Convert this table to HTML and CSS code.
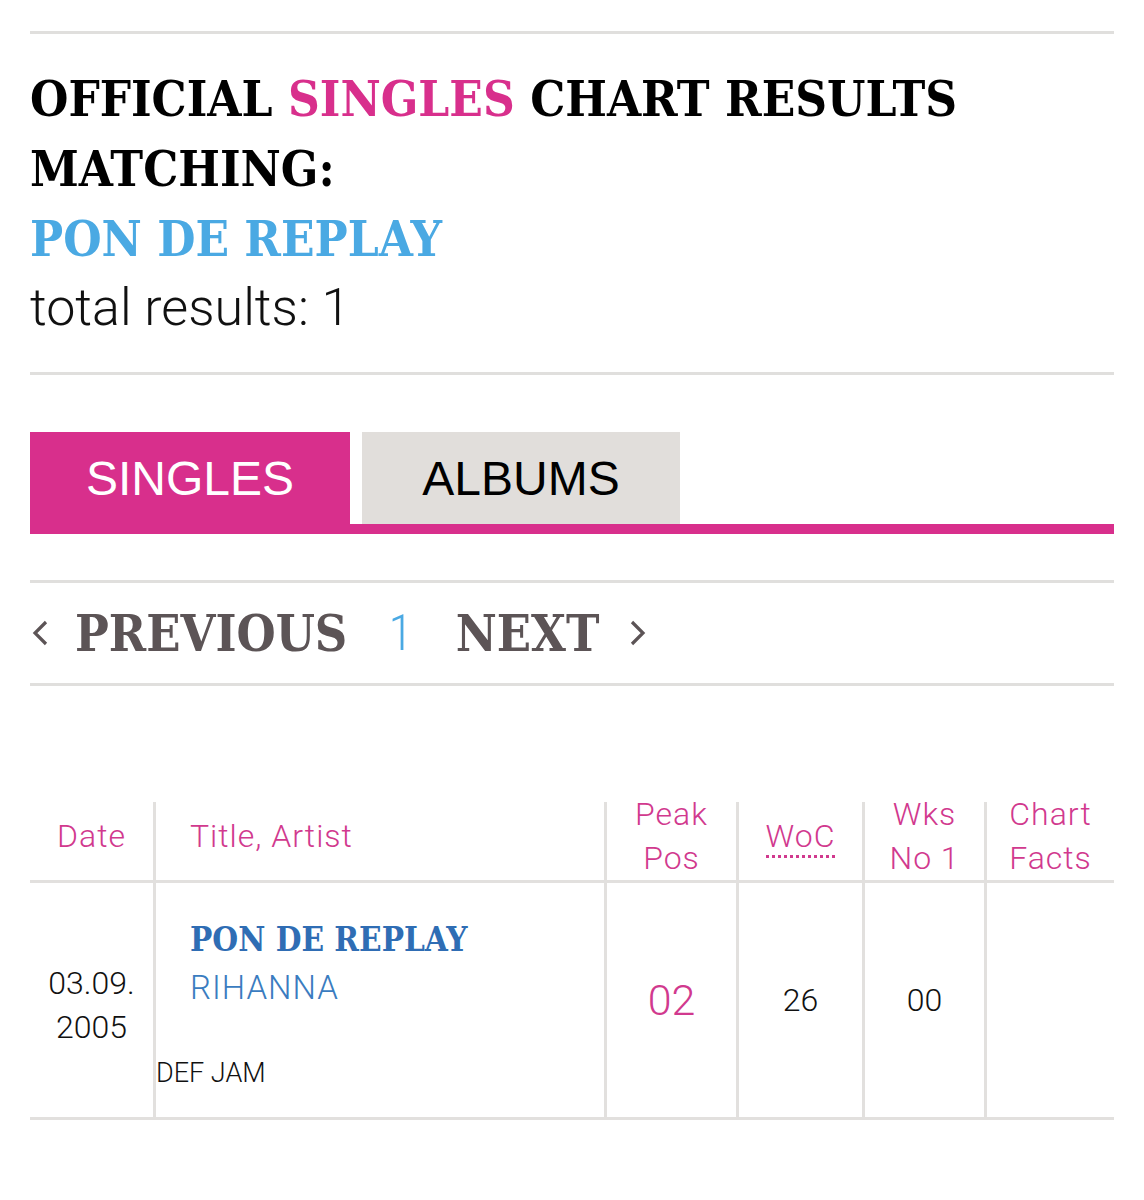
FILE: index.html
```html
<!DOCTYPE html>
<html>
<head>
<meta charset="utf-8">
<link rel="stylesheet" href="styles.css">
</head>
<body>
<div class="page">
  <hr class="rule">
  <div class="results-head">
    <h1 class="title"><span>OFFICIAL</span> <span class="pink">SINGLES</span> <span>CHART RESULTS</span> <span>MATCHING:</span></h1>
    <div class="query">PON DE REPLAY</div>
    <div class="total">total results: 1</div>
  </div>
  <hr class="rule">
  <div class="tabs">
    <div class="tab active">SINGLES</div>
    <div class="tab">ALBUMS</div>
  </div>
  <hr class="rule rule-pager">
  <div class="pager">
    <span class="chev"><svg width="16" height="26" viewBox="0 0 16 26"><path d="M14 2 L3 13 L14 24" fill="none" stroke="#5c5456" stroke-width="3.2"/></svg></span>
    <span class="pg-link">PREVIOUS</span>
    <span class="pg-num">1</span>
    <span class="pg-link">NEXT</span>
    <span class="chev"><svg width="16" height="26" viewBox="0 0 16 26"><path d="M2 2 L13 13 L2 24" fill="none" stroke="#5c5456" stroke-width="3.2"/></svg></span>
  </div>
  <hr class="rule">
  <table class="chart">
    <thead>
      <tr>
        <th class="c-date"><div class="th-in">Date</div></th>
        <th class="c-title"><div class="th-in">Title, Artist</div></th>
        <th class="c-peak"><div class="th-in">Peak<br>Pos</div></th>
        <th class="c-woc"><div class="th-in"><span class="abbr">WoC</span></div></th>
        <th class="c-wks"><div class="th-in">Wks<br>No 1</div></th>
        <th class="c-facts"><div class="th-in">Chart<br>Facts</div></th>
      </tr>
    </thead>
    <tbody>
      <tr>
        <td class="c-date">03.09.<br>2005</td>
        <td class="c-title">
          <div class="song">PON DE REPLAY</div>
          <div class="artist">RIHANNA</div>
          <div class="label">DEF JAM</div>
        </td>
        <td class="c-peak num-peak">02</td>
        <td class="c-woc num">26</td>
        <td class="c-wks num">00</td>
        <td class="c-facts"></td>
      </tr>
    </tbody>
  </table>
</div>
</body>
</html>
```
FILE: styles.css
```css
html, body {
  margin: 0;
  padding: 0;
  background: #fff;
}
body {
  font-family: "Roboto", "Liberation Sans", sans-serif;
  color: #111;
}
.page {
  margin: 0 30px;
  padding-top: 31px;
}
.rule {
  border: 0;
  height: 3px;
  background: #e0dfdd;
  margin: 0;
}
.results-head {
  padding: 30px 0 30px;
}
.title, .query {
  font-family: "DejaVu Serif Condensed", "DejaVu Serif", serif;
  font-stretch: condensed;
  font-weight: 700;
  font-size: 49px;
  line-height: 70px;
  margin: 0;
  max-width: 960px;
  color: #000;
}
.pink { color: #d82f8c; }
.query { color: #4aa9e3; }
.total {
  font-family: "Roboto", sans-serif;
  font-weight: 300;
  font-size: 52px;
  line-height: 68px;
  color: #111;
}
.tabs {
  margin-top: 57px;
  display: flex;
  gap: 12px;
  border-bottom: 10px solid #d82f8c;
}
.tab {
  width: 320px;
  height: 92px;
  display: flex;
  align-items: center;
  justify-content: center;
  font-family: "Liberation Sans", Arial, sans-serif;
  font-size: 48px;
  background: #e1dedb;
  color: #000;
}
.tab.active {
  background: #d82f8c;
  color: #fff;
}
.tab + .tab { width: 318px; }
.rule-pager { margin-top: 46px; }
.pager {
  height: 100px;
  display: flex;
  align-items: center;
  font-family: "DejaVu Serif Condensed", "DejaVu Serif", serif;
  font-stretch: condensed;
  font-weight: 700;
  font-size: 50px;
  color: #5c5456;
}
.chev { display: flex; align-items: center; }
.chev:first-child { margin: 0 27px 0 2px; }
.chev:last-child { margin-left: 31px; }
.pg-num {
  font-family: "Roboto", sans-serif;
  font-weight: 300;
  color: #4aa9e3;
  margin: 0 43px 0 41px;
}
.chart {
  margin-top: 116px;
  width: 100%;
  border-collapse: collapse;
  table-layout: fixed;
  font-family: "Roboto", sans-serif;
  font-weight: 300;
}
.chart th {
  font-weight: 300;
  color: #d1398e;
  font-size: 32px;
  letter-spacing: 1px;
  line-height: 44px;
  height: 78px;
  padding: 0;
  vertical-align: middle;
  border-bottom: 3px solid #e2e0de;
  text-align: center;
}
.th-in { margin: -10px 0 0; }
.chart th + th, .chart td + td {
  border-left: 3px solid #e2e0de;
}
.chart tbody tr { height: 237px; }
.chart td {
  border-bottom: 3px solid #e2e0de;
  padding: 0;
  text-align: center;
  vertical-align: middle;
}
.c-date { width: 123px; }
.c-peak { width: 129px; }
.c-woc { width: 123px; }
.c-wks { width: 119px; }
.c-facts { width: 127px; }
.chart th.c-title { text-align: left; padding-left: 34px; }
.abbr {
  border-bottom: 3px dotted #d1398e;
}
.chart td.c-date {
  font-size: 32px;
  line-height: 44px;
  color: #111;
  padding-top: 10px;
}
.chart td.c-title {
  text-align: left;
  vertical-align: top;
  padding-top: 34px;
}
.song {
  font-family: "DejaVu Serif Condensed", "DejaVu Serif", serif;
  font-stretch: condensed;
  font-weight: 700;
  font-size: 33px;
  line-height: 46px;
  color: #2f6db4;
  margin-left: 34px;
}
.artist {
  font-size: 33px;
  letter-spacing: 1px;
  line-height: 50px;
  color: #3a7cc0;
  margin-left: 34px;
}
.label {
  font-size: 27px;
  line-height: 32px;
  color: #111;
  margin-top: 44px;
}
.num-peak {
  font-size: 43px;
  color: #d1398e;
}
.num {
  font-size: 32px;
  color: #111;
}
```
